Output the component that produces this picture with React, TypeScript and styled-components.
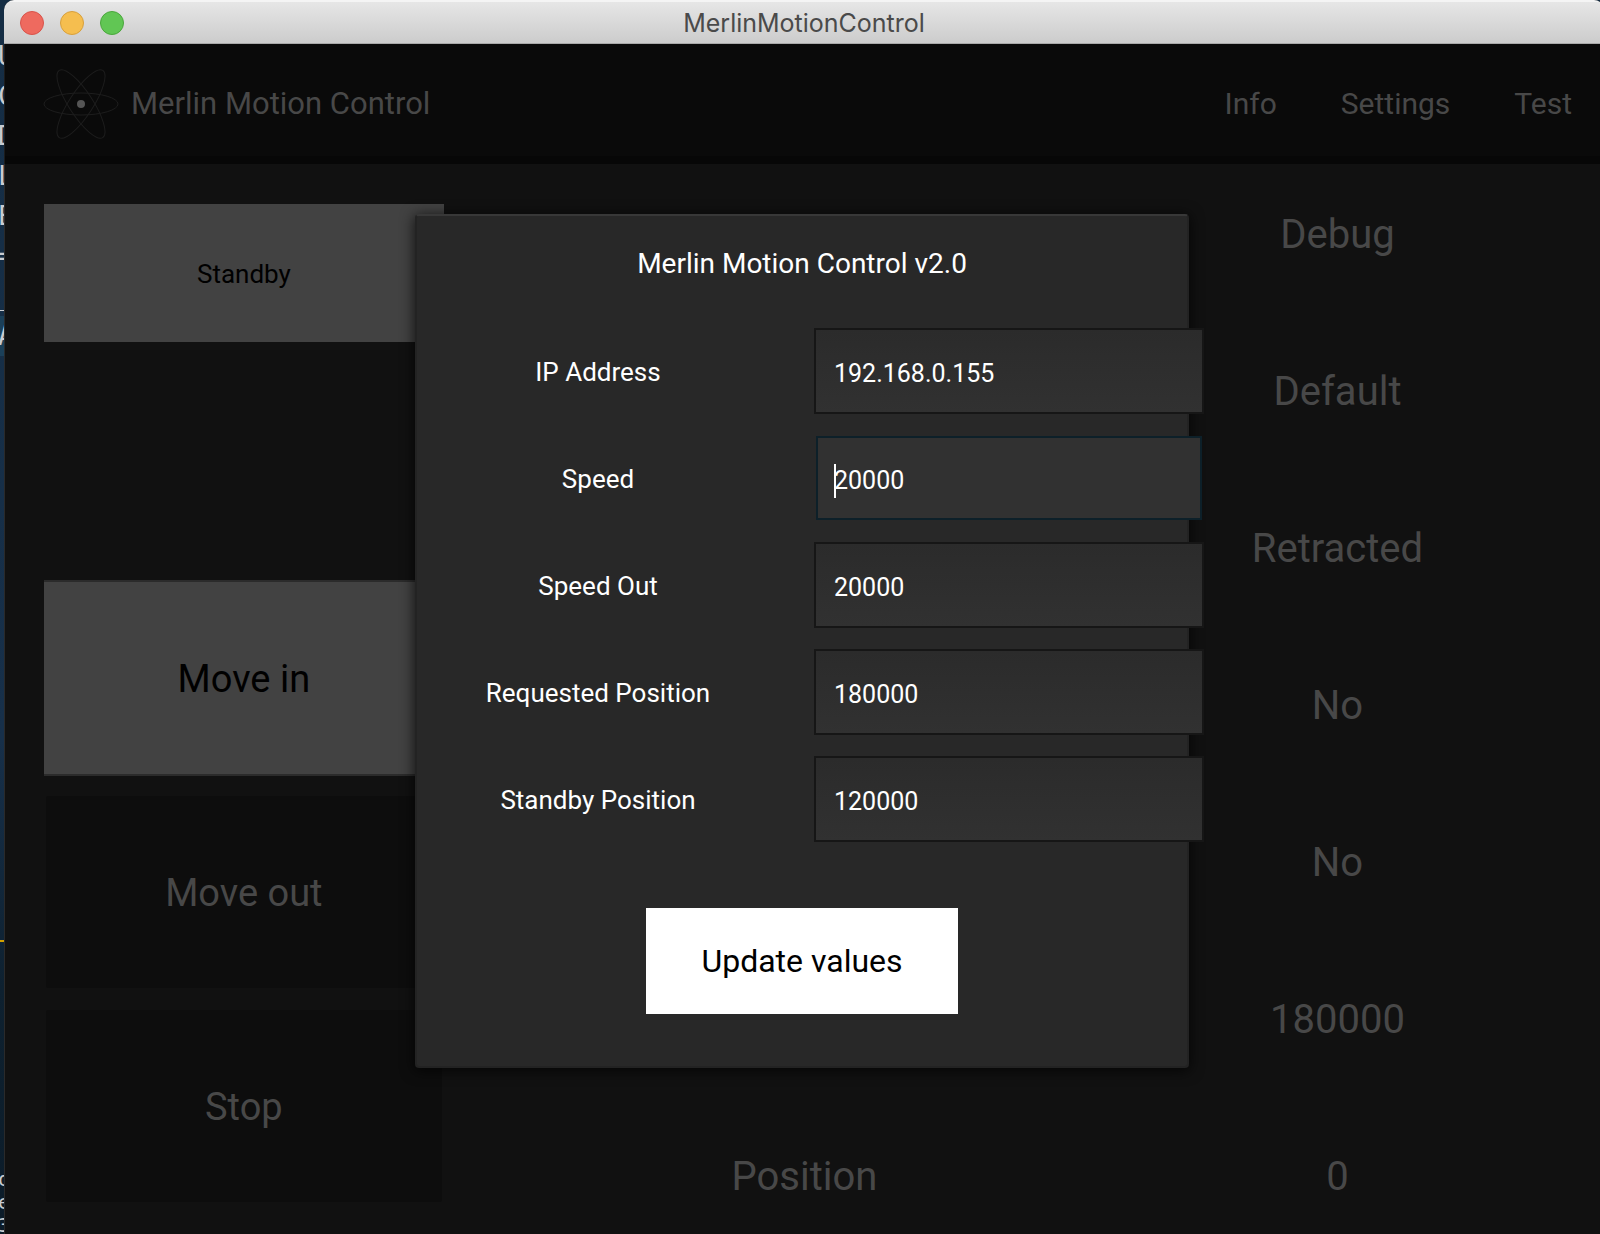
import React from 'react';
import styled, { createGlobalStyle, css } from 'styled-components';

const Global = createGlobalStyle`
  *, *::before, *::after { box-sizing: border-box; }
  html, body { margin: 0; background: #152b40; }
  body { overflow: hidden; font-family: Roboto, "Liberation Sans", sans-serif; color: #484848; }
  button, input { font: inherit; color: inherit; margin: 0; border: 0; border-radius: 0; }
  h1, h2, dl, dd, dt { margin: 0; font-weight: 400; }
`;

const Desktop = styled.div`
  display: flex;
  min-height: 100vh;
  background: linear-gradient(#152d44, #17304a 60%, #0e2130 80%, #0c1c29);
`;

const Terminal = styled.div`
  flex: 0 0 4px;
  display: flex;
  flex-direction: column;
  overflow: hidden;
  height: 100vh;
  padding-top: 36px;
  color: #c9ccd0;
  font-family: "DejaVu Sans Mono", "Liberation Mono", monospace;
`;

const TermLine = styled.span<{ $lit?: boolean }>`
  flex: none;
  margin-left: -2px;
  font-size: 26px;
  line-height: 40px;
  background: ${p => (p.$lit ? '#1b4059' : 'transparent')};
`;

const TermRule = styled.i`
  flex: none;
  height: 2px;
  margin: 584px 0 226px;
  background: #d3a100;
`;

const TermSmall = styled.span`
  flex: none;
  margin-left: -2px;
  font-size: 20px;
  line-height: 23px;
`;

const Window = styled.div`
  position: relative;
  flex: 0 0 100%;
  display: flex;
  flex-direction: column;
  border-radius: 10px 10px 0 0;
  overflow: hidden;
  background: #111111;
`;

const TitleBar = styled.header`
  display: grid;
  grid-template-columns: 1fr auto 1fr;
  align-items: center;
  height: 44px;
  padding: 0 16px;
  background: linear-gradient(#e6e6e6, #cccccc);
  border-top: 2px solid #f4f4f4;
  border-bottom: 1px solid #a9a9a9;
`;

const Lights = styled.div`
  display: flex;
  gap: 16px;
`;

const Light = styled.button<{ $fill: string; $rim: string }>`
  width: 24px;
  height: 24px;
  padding: 0;
  && { border: 1px solid ${p => p.$rim}; border-radius: 50%; }
  background: ${p => p.$fill};
`;

const WindowTitle = styled.span`
  font-family: Inter, Roboto, sans-serif;
  font-size: 25px;
  line-height: 32px;
  color: #4a4a4a;
`;

const AppBar = styled.div`
  display: flex;
  align-items: center;
  height: 120px;
  padding-left: 38px;
  background: linear-gradient(#0a0a0a 112px, #070707 112px);
  border-left: 1px solid #1c1c1c;
  font-size: 30px;
  line-height: 36px;
`;

const Brand = styled.h1`
  flex: 1;
  display: flex;
  align-items: center;
  gap: 12px;
  font-size: 31px;
`;

const Nav = styled.nav`
  display: flex;
`;

const NavLink = styled.a`
  padding: 0 32px;
  color: inherit;
  text-decoration: none;
`;

const Content = styled.main`
  flex: 1;
  display: grid;
  grid-template-columns: 1fr 2fr;
  border-left: 1px solid #2a2a2a;
`;

const Actions = styled.div`
  display: flex;
  flex-direction: column;
  width: 75%;
  margin: 40px 0 28px 39px;
`;

const MoveGroup = styled.div`
  display: grid;
  gap: 18px;
  margin-top: 238px;
`;

const ActionButton = styled.button<{ $kind: 'standby' | 'light' | 'dark' }>`
  width: 100%;
  padding: 2px 0 0;
  cursor: pointer;
  ${p => p.$kind === 'standby' && css`
    height: 138px;
    font-size: 26px;
    background: #424242;
    && { color: #000; }
  `}
  ${p => p.$kind === 'light' && css`
    && { border: solid #2b2b2b; border-width: 2px 0; color: #000; }
    height: 196px;
    font-size: 38px;
    background: #424242;
  `}
  ${p => p.$kind === 'dark' && css`
    && { border: 2px solid transparent; border-radius: 4px; }
    height: 196px;
    font-size: 38px;
    background: #0d0d0d padding-box;
  `}
`;

const Status = styled.dl`
  padding-top: 47px;
  font-size: 40px;
  line-height: 48px;
  text-align: center;
`;

const StatusRow = styled.div`
  display: grid;
  grid-template-columns: 1fr 1fr;
  height: 157px;
  &:last-child { height: 48px; }
`;

const Overlay = styled.div`
  position: absolute;
  inset: 44px 0 0;
  display: flex;
  justify-content: center;
  align-items: flex-start;
  padding: 170px 4px 0 0;
`;

const Dialog = styled.section`
  display: flex;
  flex-direction: column;
  align-items: center;
  width: 774px;
  padding: 32px 0 52px;
  background: #282828;
  border: 2px solid #232323;
  border-top-color: #383838;
  border-radius: 4px;
  box-shadow: 0 2px 14px 1px rgba(0, 0, 0, 0.7);
  color: #fff;
`;

const DialogTitle = styled.h2`
  font-size: 28px;
  line-height: 32px;
`;

const Fields = styled.form`
  display: grid;
  gap: 21px;
  align-self: stretch;
  margin: 48px -17px 66px -14px;
  font-size: 26px;
`;

const Field = styled.div`
  display: grid;
  grid-template-columns: 1fr 1fr;
  column-gap: 21px;
  align-items: center;
  text-align: center;
`;

const FieldLabel = styled.label`
  padding-top: 2px;
`;

const InputSlot = styled.div<{ $active: boolean }>`
  position: relative;
  display: flex;
  height: 86px;
  ${p => p.$active && css`
    padding: 1px 2px;
    &::after {
      content: '';
      position: absolute;
      top: 29px;
      left: 20px;
      width: 2px;
      height: 34px;
      background: #fff;
    }
  `}
`;

const TextInput = styled.input<{ $active: boolean }>`
  flex: 1;
  min-width: 0;
  padding: 5px 16px 0 ${p => (p.$active ? 16 : 18)}px;
  && { border: 2px solid ${p => (p.$active ? '#0d2029' : '#161616')}; font-size: 25px; }
  background: ${p => (p.$active ? '#313131' : 'linear-gradient(#2b2b2b, #313131)')};
  outline: none;
`;

const UpdateButton = styled.button`
  width: 312px;
  height: 106px;
  background: #fff;
  && { color: #000; font-size: 32px; }
`;

const Atom = () => (
  <svg width="76" height="72" viewBox="0 0 76 72" fill="none" stroke="#1d1d1d" aria-hidden="true">
    <ellipse cx="38" cy="36" rx="37" ry="11" />
    <ellipse cx="38" cy="36" rx="40" ry="12" transform="rotate(57 38 36)" />
    <ellipse cx="38" cy="36" rx="40" ry="12" transform="rotate(-57 38 36)" />
    <circle cx="38" cy="36" r="4" fill="#555555" stroke="none" />
  </svg>
);

const statusRows = [
  { label: '', value: 'Debug' },
  { label: '', value: 'Default' },
  { label: '', value: 'Retracted' },
  { label: '', value: 'No' },
  { label: '', value: 'No' },
  { label: '', value: '180000' },
  { label: 'Position', value: '0' },
];

const fields = [
  { id: 'ip', label: 'IP Address', value: '192.168.0.155' },
  { id: 'speed', label: 'Speed', value: '20000', active: true },
  { id: 'speed-out', label: 'Speed Out', value: '20000' },
  { id: 'requested', label: 'Requested Position', value: '180000' },
  { id: 'standby', label: 'Standby Position', value: '120000' },
];

export default function App() {
  return (
    <Desktop>
      <Global />
      <Terminal aria-hidden="true">
        {['U', 'C', 'D', 'L', 'E', '=', '_'].map(c => <TermLine key={c}>{c}</TermLine>)}
        <TermLine $lit>A</TermLine>
        <TermRule />
        {['o', 'e', '3'].map(c => <TermSmall key={c}>{c}</TermSmall>)}
      </Terminal>
      <Window>
        <TitleBar>
          <Lights>
            <Light aria-label="Close" $fill="#ee6a5f" $rim="#d9534a" />
            <Light aria-label="Minimize" $fill="#f5be4f" $rim="#d8a03c" />
            <Light aria-label="Zoom" $fill="#61c654" $rim="#4aa73c" />
          </Lights>
          <WindowTitle>MerlinMotionControl</WindowTitle>
        </TitleBar>
        <AppBar>
          <Brand><Atom />Merlin Motion Control</Brand>
          <Nav>
            <NavLink href="#info">Info</NavLink>
            <NavLink href="#settings">Settings</NavLink>
            <NavLink href="#test">Test</NavLink>
          </Nav>
        </AppBar>
        <Content>
          <Actions>
            <ActionButton $kind="standby">Standby</ActionButton>
            <MoveGroup>
              <ActionButton $kind="light">Move in</ActionButton>
              <ActionButton $kind="dark">Move out</ActionButton>
              <ActionButton $kind="dark">Stop</ActionButton>
            </MoveGroup>
          </Actions>
          <Status>
            {statusRows.map((row, i) => (
              <StatusRow key={i}>
                <dt>{row.label}</dt>
                <dd>{row.value}</dd>
              </StatusRow>
            ))}
          </Status>
        </Content>
        <Overlay>
          <Dialog role="dialog" aria-labelledby="dialog-title">
            <DialogTitle id="dialog-title">Merlin Motion Control v2.0</DialogTitle>
            <Fields id="values">
              {fields.map(f => (
                <Field key={f.id}>
                  <FieldLabel htmlFor={f.id}>{f.label}</FieldLabel>
                  <InputSlot $active={!!f.active}>
                    <TextInput id={f.id} type="text" defaultValue={f.value} $active={!!f.active} />
                  </InputSlot>
                </Field>
              ))}
            </Fields>
            <UpdateButton type="submit" form="values">Update values</UpdateButton>
          </Dialog>
        </Overlay>
      </Window>
    </Desktop>
  );
}
